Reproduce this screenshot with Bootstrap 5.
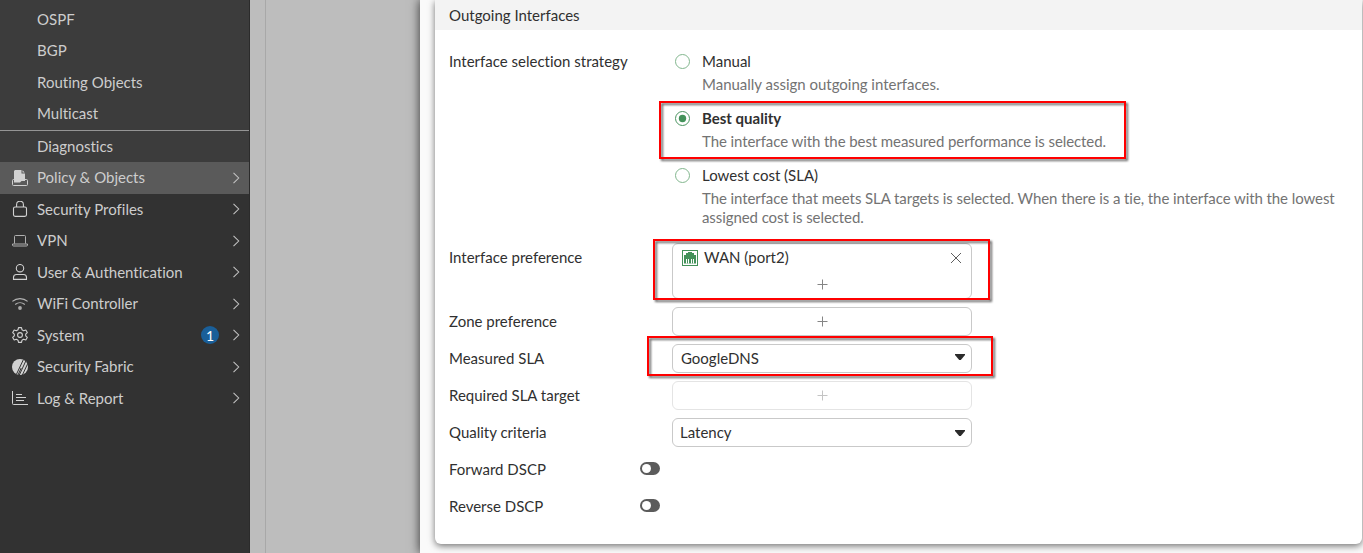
<!DOCTYPE html>
<html lang="en">
<head>
<meta charset="utf-8">
<title>Outgoing Interfaces</title>
<link href="https://cdn.jsdelivr.net/npm/bootstrap@5.3.0/dist/css/bootstrap.min.css" rel="stylesheet">
<style>
body{font-family:Lato,"Liberation Sans",sans-serif;font-size:15px;line-height:19px;font-variant-ligatures:none;color:#303030;background:#bdbdbd;height:553px;overflow:hidden}
.shell{height:553px}
.sidebar{width:250px;background:#323232;color:#cdcdcd;border-right:1px solid #2b2b2b}
.submenu{background:#3c3c3c;padding-top:3.5px}
.side-item{height:31.5px;padding:0 9px 0 12px;color:inherit;text-decoration:none}
.side-item .glyph{width:16px;height:16px;margin-right:9px;flex:none}
.side-item .chev{width:8px;height:12px;flex:none}
.submenu .side-item{padding-left:37px}
.submenu .last-group{border-top:1px solid #959595}
.side-item.current{background:#5a5a5a}
.count{width:18px;height:18px;font-size:14px;background:#1a5f99;color:#fff;margin-right:13px}
.gutter{width:16px;border-right:1px solid #a8a8a8}
.backdrop{width:154px}
.sheet{background:#fafafa;padding:0 1px 0 15px;box-shadow:0 0 10px rgba(0,0,0,.75);z-index:1;min-width:0}
.panel{height:544px;background:#fff;border-radius:0 0 6px 6px;box-shadow:0 2px 7px rgba(0,0,0,.55)}
.panel-head{height:30px;background:#f3f3f3;padding:6px 14px 0}
.panel-form{padding:22px 14px 0}
.field-label{width:223px;flex:none}
.choice{padding-left:30px;margin-bottom:15px}
.choice p{color:#737373;margin:4px 0 0;letter-spacing:-.015px}
.choice p.snug{letter-spacing:-.08px}
.radio{left:3px;top:2px;width:15px;height:15px}
.field{min-height:29px;margin-bottom:8px}
.pref-label{padding-top:5px}
.control{width:300px;height:29px;border:1px solid #c9c9c9;border-radius:6px;background:#fff}
.control.off{border-color:#e4e4e4}
.control.tall{height:56px}
.pick{padding:0 6px 0 8px}
.pick.latency{padding-left:7px}
.entry{padding:4px 9px 0;gap:6px}
.add{margin-left:1px}
.marker{border:2px solid #f00;filter:drop-shadow(2px 2px 1px rgba(0,0,0,.6));pointer-events:none}
.marker-quality{left:-13px;top:-8px;width:467px;height:58px}
.marker-pref{left:-19px;top:-4px;width:337px;height:61px}
.marker-sla{left:-25px;top:-8px;width:346px;height:40px}
.toggle{width:20px;height:13px;border-radius:7px;background:#5c5c5c;padding:2px;margin:-3px 12px 0 0}
.toggle span{display:block;width:9px;height:9px;border-radius:50%;background:#fff}
svg{display:block}
</style>
</head>
<body>
<svg width="0" height="0" class="position-absolute">
<symbol id="chev" viewBox="0 0 8 12"><path d="M1.500.8 6.700 6 1.500 11.200" fill="none" stroke="#c4c4c4" stroke-width="1.050"/></symbol>
<symbol id="plus" viewBox="0 0 11 11"><path d="M5.500.5v10M.5 5.500h10" stroke="currentColor" stroke-width="1"/></symbol>
<symbol id="off" viewBox="0 0 15 15"><circle cx="7.500" cy="7.500" r="7" fill="#fff" stroke="#82b68e" stroke-width="1"/></symbol>
</svg>
<div class="shell d-flex">
  <nav class="sidebar flex-shrink-0">
    <div class="submenu">
      <a class="side-item d-flex align-items-center">OSPF</a>
      <a class="side-item d-flex align-items-center">BGP</a>
      <a class="side-item d-flex align-items-center">Routing Objects</a>
      <a class="side-item d-flex align-items-center">Multicast</a>
      <div class="last-group"><a class="side-item d-flex align-items-center">Diagnostics</a></div>
    </div>
    <a class="side-item current d-flex align-items-center"><svg class="glyph" viewBox="0 0 16 16"><path d="M1.500 9.500h13a1 1 0 0 1 1 1v4a1 1 0 0 1-1 1h-13a1 1 0 0 1-1-1v-4a1 1 0 0 1 1-1z" fill="none" stroke="#cfcfcf"/><path d="M3 0h6.500v3.500H13V11H9.500L8 12.500H2V1z" fill="#d2d2d2"/><path d="M10.500.3 12.700 2.500h-2.200z" fill="#d2d2d2"/></svg><span class="me-auto">Policy &amp; Objects</span><svg class="chev"><use href="#chev"/></svg></a>
    <a class="side-item d-flex align-items-center"><svg class="glyph" viewBox="0 0 16 16" fill="none" stroke="#d2d2d2" stroke-width="1.100"><rect x="1.500" y="6" width="13" height="9.400" rx="1.600"/><path d="M4.600 6V3.600a3.400 3.400 0 0 1 6.800 0V6"/></svg><span class="me-auto">Security Profiles</span><svg class="chev"><use href="#chev"/></svg></a>
    <a class="side-item d-flex align-items-center"><svg class="glyph" viewBox="0 0 16 16" fill="none" stroke="#b0b0b0"><path d="M2.500 10.600V3.500a1 1 0 0 1 1-1h9a1 1 0 0 1 1 1v7.100M.5 11h15v1a1 1 0 0 1-1 1h-13a1 1 0 0 1-1-1z"/></svg><span class="me-auto">VPN</span><svg class="chev"><use href="#chev"/></svg></a>
    <a class="side-item d-flex align-items-center"><svg class="glyph" viewBox="0 0 16 16" fill="none" stroke="#d2d2d2" stroke-width="1.100"><circle cx="8" cy="4.200" r="3.700"/><path d="M1.500 15.400v-1.900c0-1.800 1.300-3 3-3h7c1.700 0 3 1.200 3 3v1.900z"/></svg><span class="me-auto">User &amp; Authentication</span><svg class="chev"><use href="#chev"/></svg></a>
    <a class="side-item d-flex align-items-center"><svg class="glyph" viewBox="0 0 16 16" fill="none" stroke="#b4b4b4" stroke-width="1.100"><path d="M.4 5.400C4.700 1.700 11.300 1.700 15.600 5.400M3.200 8.500C6 6.200 10 6.200 12.800 8.500"/><circle cx="8" cy="12" r="1.900" fill="#aaa" stroke="none"/></svg><span class="me-auto">WiFi Controller</span><svg class="chev"><use href="#chev"/></svg></a>
    <a class="side-item d-flex align-items-center"><svg class="glyph" viewBox="0 0 16 16" fill="none" stroke="#d2d2d2" stroke-width="1.100" stroke-linejoin="round"><path d="M6.500.6h3l.5 2.200 1.600.9 2.200-.7 1.500 2.600L13.700 7.100v1.800l1.600 1.500-1.500 2.600-2.200-.7-1.600.9-.5 2.200h-3L6 13.200l-1.600-.9-2.200.7L.7 10.400l1.600-1.500V7.100L.7 5.600 2.200 3l2.200.7L6 2.800z"/><circle cx="8" cy="8" r="2.400"/></svg><span class="me-auto">System</span><span class="count rounded-circle d-flex align-items-center justify-content-center">1</span><svg class="chev"><use href="#chev"/></svg></a>
    <a class="side-item d-flex align-items-center"><svg class="glyph" viewBox="0 0 16 16"><circle cx="8" cy="8" r="8" fill="#d2d2d2"/><path d="M11.400.6 4.400 15.400M13.800 2 7.300 16M16 4l-5.600 12M9.200 9 6 16" stroke="#323232" stroke-width="1" fill="none"/></svg><span class="me-auto">Security Fabric</span><svg class="chev"><use href="#chev"/></svg></a>
    <a class="side-item d-flex align-items-center"><svg class="glyph" viewBox="0 0 16 16" fill="none" stroke="#d2d2d2"><path d="M.5 1v12.500a1 1 0 0 0 1 1H16M4 4.500h6M4 7.500h10M4 10.500h8"/></svg><span class="me-auto">Log &amp; Report</span><svg class="chev"><use href="#chev"/></svg></a>
  </nav>
  <div class="gutter flex-shrink-0"></div>
  <div class="backdrop flex-shrink-0"></div>
  <main class="sheet flex-grow-1">
    <section class="panel">
      <div class="panel-head">Outgoing Interfaces</div>
      <div class="panel-form">
        <div class="d-flex">
          <div class="field-label">Interface selection strategy</div>
          <div class="flex-grow-1">
            <div class="choice position-relative"><svg class="radio position-absolute"><use href="#off"/></svg>Manual<p>Manually assign outgoing interfaces.</p></div>
            <div class="choice position-relative"><svg class="radio position-absolute" viewBox="0 0 15 15"><circle cx="7.500" cy="7.500" r="7" fill="#fff" stroke="#4b9460"/><circle cx="7.500" cy="7.500" r="3.700" fill="#43925a"/></svg><b>Best quality</b><p class="snug">The interface with the best measured performance is selected.</p><div class="marker marker-quality position-absolute"></div></div>
            <div class="choice position-relative mb-3"><svg class="radio position-absolute"><use href="#off"/></svg>Lowest cost (SLA)<p class="snug">The interface that meets SLA targets is selected. When there is a tie, the interface with the lowest assigned cost is selected.</p></div>
          </div>
        </div>
        <div class="field d-flex">
          <div class="field-label pref-label">Interface preference</div>
          <div class="position-relative">
            <div class="control tall d-flex flex-column">
              <div class="entry d-flex align-items-center"><svg width="16" height="16" viewBox="0 0 16 16"><path d="M0 0h16v16H0z" fill="#43925a"/><path d="M1 1h14v14H1z" fill="#fff"/><path d="M2 13.500V5h2V3h2V2h4v1h2v2h2v8.500z" fill="#43925a"/><path d="M4.500 9v4.500M6.500 9v4.500M9.500 9v4.500M11.500 9v4.500" stroke="#fff"/></svg><span class="me-auto">WAN (port2)</span><svg width="12" height="12" viewBox="0 0 12 12"><path d="m1 1 10 10M11 1 1 11" stroke="#5e5e5e"/></svg></div>
              <div class="d-flex justify-content-center mt-auto pb-2"><svg width="11" height="11" color="#858585" class="add"><use href="#plus"/></svg></div>
            </div>
            <div class="marker marker-pref position-absolute"></div>
          </div>
        </div>
        <div class="field d-flex align-items-center"><div class="field-label">Zone preference</div><div class="control d-flex align-items-center justify-content-center"><svg width="11" height="11" color="#858585" class="add"><use href="#plus"/></svg></div></div>
        <div class="field d-flex align-items-center"><div class="field-label">Measured SLA</div><div class="position-relative"><div class="control pick d-flex align-items-center justify-content-between">GoogleDNS<svg width="10" height="6" viewBox="0 0 10 6" class="mb-1"><path d="M0 0h10v1L5.800 6H4.200L0 1z" fill="#2b2b2b"/></svg></div><div class="marker marker-sla position-absolute"></div></div></div>
        <div class="field d-flex align-items-center"><div class="field-label">Required SLA target</div><div class="control off d-flex align-items-center justify-content-center"><svg width="11" height="11" color="#c4c4c4" class="add"><use href="#plus"/></svg></div></div>
        <div class="field d-flex align-items-center"><div class="field-label">Quality criteria</div><div class="control pick latency d-flex align-items-center justify-content-between">Latency<svg width="10" height="6" viewBox="0 0 10 6"><path d="M0 0h10v1L5.800 6H4.200L0 1z" fill="#2b2b2b"/></svg></div></div>
        <div class="field d-flex align-items-center"><div class="field-label d-flex justify-content-between align-items-center">Forward DSCP<div class="toggle"><span></span></div></div></div>
        <div class="field d-flex align-items-center"><div class="field-label d-flex justify-content-between align-items-center">Reverse DSCP<div class="toggle"><span></span></div></div></div>
      </div>
    </section>
  </main>
</div>
<script src="https://cdn.jsdelivr.net/npm/bootstrap@5.3.0/dist/js/bootstrap.bundle.min.js"></script>
</body>
</html>
